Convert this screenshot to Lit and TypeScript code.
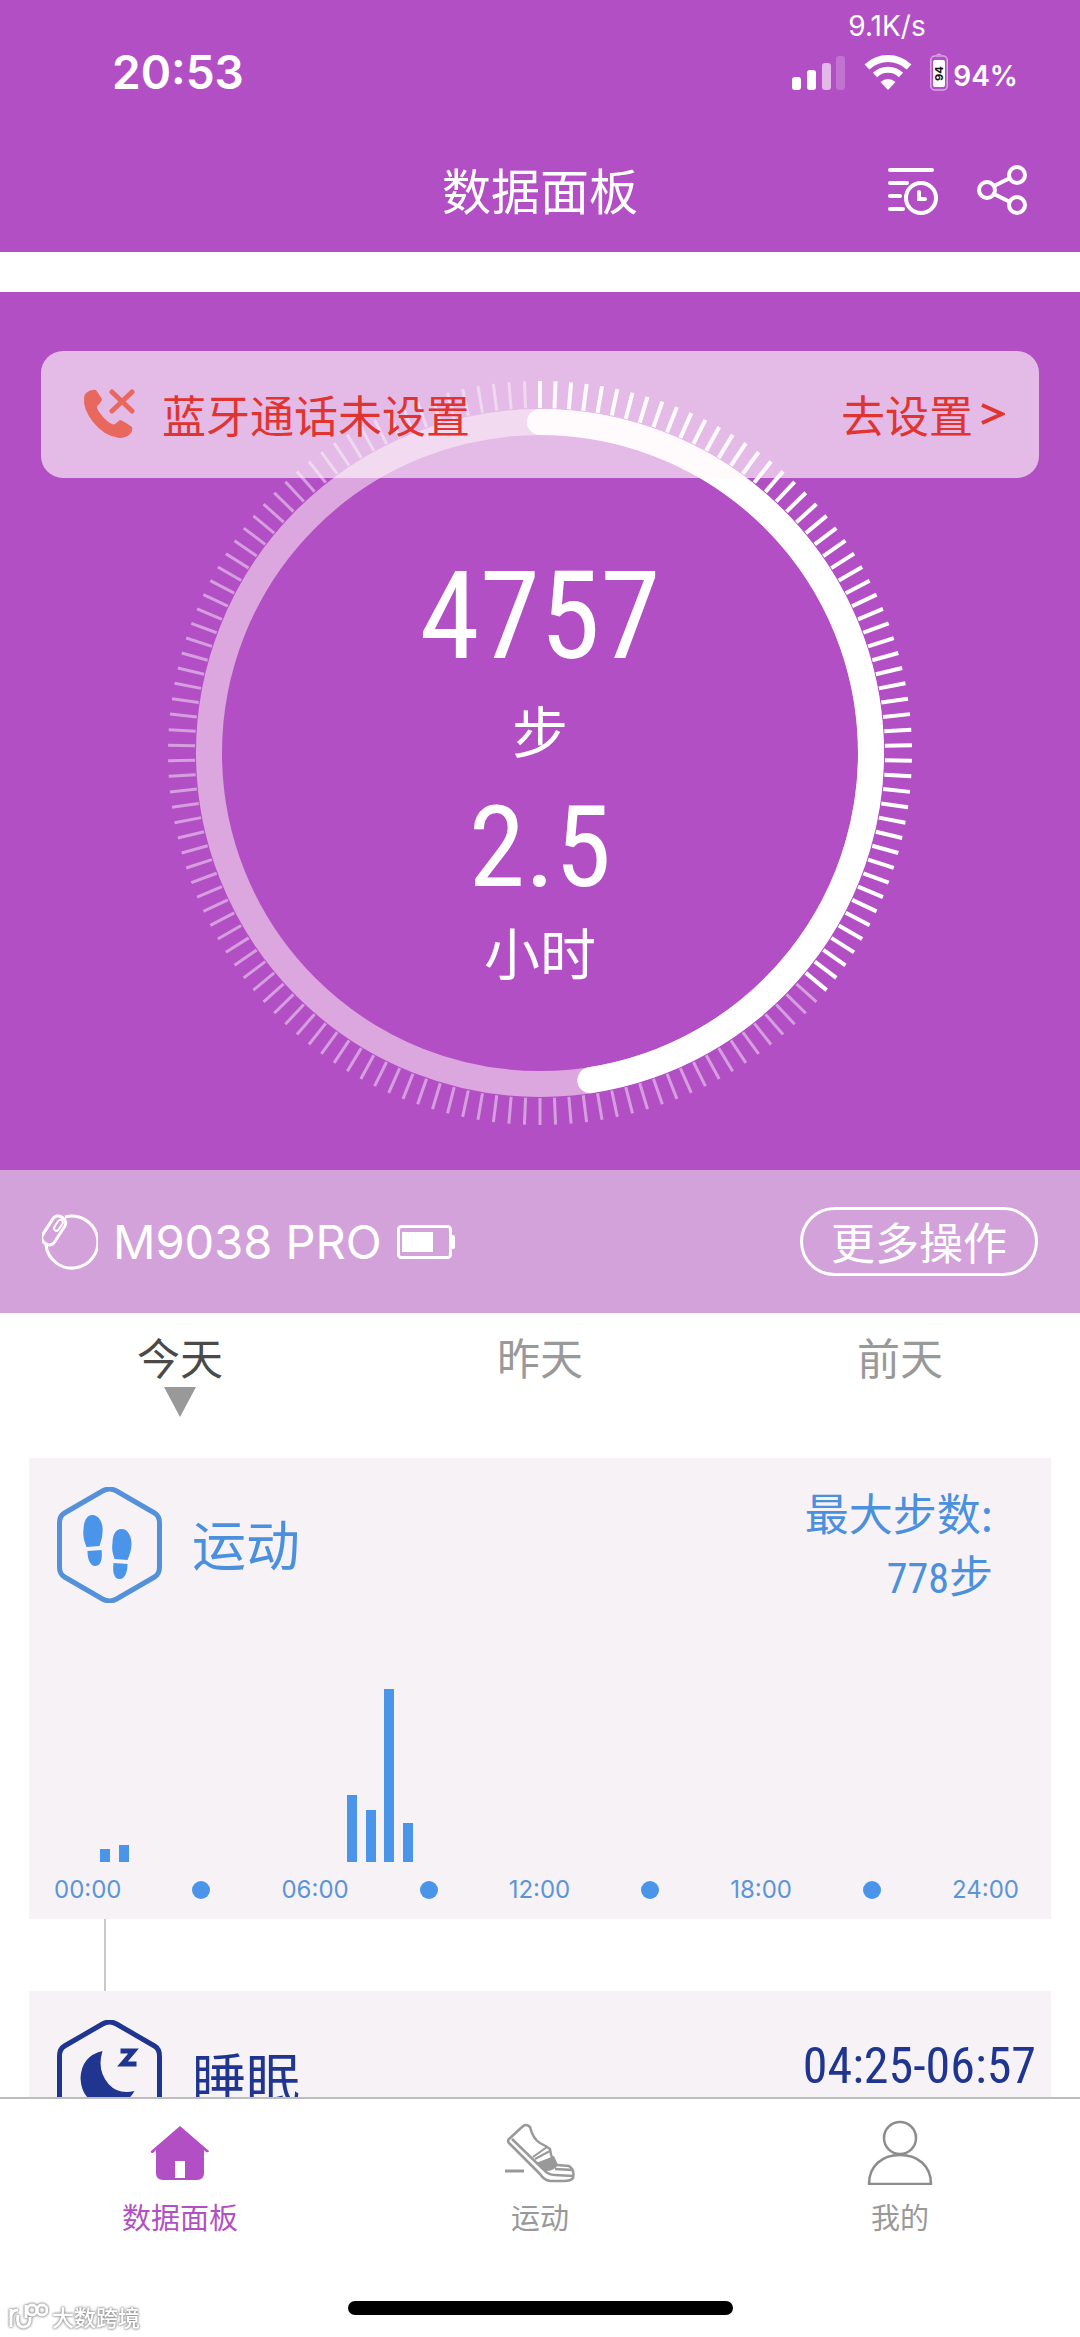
import { LitElement, html, svg, css } from "lit";
import { customElement, state } from "lit/decorators.js";

const STEPS = 4757;
const GOAL = 10000;
const TICKS = 150;
const ACTIVE_TICKS = 54;

const DAYS = ["今天", "昨天", "前天"];

/* Half-hour slots of the day that hold steps: slot index and bar height. */
const ACTIVITY = new Map<number, number>([
  [1, 13],
  [2, 17],
  [14, 67],
  [15, 52],
  [16, 173],
  [17, 39],
]);

const HEX = "M45 4 Q52 0 59 4 L97 26 Q102 29 102 36 V80 Q102 87 97 90 L59 112 Q52 116 45 112 L7 90 Q2 87 2 80 V36 Q2 29 7 26 Z";

const base = css`
  *,
  *::before,
  *::after {
    box-sizing: border-box;
  }
  svg {
    display: block;
    flex: none;
  }
  button {
    margin: 0;
    padding: 0;
    border: 0;
    background: none;
    font: inherit;
    color: inherit;
    cursor: pointer;
  }
`;

@customElement("step-ring")
export class StepRing extends LitElement {
  static styles = [
    base,
    css`
      :host {
        display: grid;
        width: 744px;
        max-width: 100%;
      }
      .dial,
      .readout {
        grid-area: 1 / 1;
      }
      .dial {
        width: 100%;
        height: auto;
      }
      .readout {
        display: flex;
        flex-direction: column;
        align-items: center;
        padding-top: 166px;
      }
      .figure {
        font-family: "Roboto Condensed", "Liberation Sans Narrow", sans-serif;
        font-size: 122px;
        line-height: 140px;
      }
      .figure.small {
        margin-top: 14px;
        font-size: 114px;
        line-height: 124px;
      }
      .unit {
        font-size: 56px;
        line-height: 84px;
      }
    `,
  ];

  render() {
    const angle = (STEPS / GOAL) * 2 * Math.PI;
    const x = 372 + 331 * Math.sin(angle);
    const y = 372 - 331 * Math.cos(angle);
    return html`
      <svg class="dial" viewBox="0 0 744 744" aria-hidden="true">
        ${Array.from(
          { length: TICKS },
          (_, i) => svg`<line x1="372" y1="0" x2="372" y2="27" stroke="#fff"
            stroke-width=${i <= ACTIVE_TICKS ? 4 : 3}
            stroke-opacity=${i <= ACTIVE_TICKS ? 1 : 0.45}
            transform="rotate(${(i * 360) / TICKS} 372 372)" />`,
        )}
        <circle cx="372" cy="372" r="331" fill="none" stroke="#dca6df" stroke-width="26" />
        <path d="M372 41 A331 331 0 0 1 ${x} ${y}" fill="none" stroke="#fff" stroke-width="26" stroke-linecap="round" />
      </svg>
      <div class="readout">
        <span class="figure">${STEPS}</span>
        <span class="unit">步</span>
        <span class="figure small">2.5</span>
        <span class="unit">小时</span>
      </div>
    `;
  }
}

@customElement("step-chart")
export class StepChart extends LitElement {
  static styles = [
    base,
    css`
      :host {
        display: block;
      }
      .bars {
        display: grid;
        grid-template-columns: repeat(48, 1fr);
        align-items: end;
        justify-items: center;
        height: 175px;
        padding: 0 65px 0 48px;
      }
      .bar {
        width: 10px;
        background: #4a94e9;
      }
      .axis {
        display: flex;
        justify-content: space-between;
        align-items: center;
        padding: 14px 32px 15px 25px;
        font-family: Inter, sans-serif;
        font-size: 24px;
        line-height: 28px;
        color: #5a95d8;
      }
      .dot {
        width: 18px;
        height: 18px;
        border-radius: 50%;
        background: #4a94e9;
      }
    `,
  ];

  render() {
    return html`
      <div class="bars">
        ${Array.from({ length: 48 }, (_, i) =>
          ACTIVITY.has(i) ? html`<i class="bar" style="height:${ACTIVITY.get(i)}px"></i>` : html`<i></i>`,
        )}
      </div>
      <div class="axis">
        <span>00:00</span><i class="dot"></i><span>06:00</span><i class="dot"></i><span>12:00</span><i
          class="dot"
        ></i><span>18:00</span><i class="dot"></i><span>24:00</span>
      </div>
    `;
  }
}

@customElement("app-root")
export class AppRoot extends LitElement {
  @state() private day = 0;

  static styles = [
    base,
    css`
      :host {
        display: flex;
        flex-direction: column;
        position: relative;
        height: 100vh;
        overflow: hidden;
        background: #fff;
        font-family: "Noto Sans CJK SC", sans-serif;
        font-weight: 400;
        color: #fff;
      }
      .top {
        flex: none;
        background: #b34fc5;
      }
      .status {
        display: flex;
        justify-content: space-between;
        height: 132px;
        padding: 10px 62px 0 112px;
        font-family: Inter, sans-serif;
      }
      .clock {
        padding-top: 34px;
        font-size: 46px;
        font-weight: 600;
        line-height: 56px;
      }
      .signals {
        display: flex;
        flex-direction: column;
      }
      .speed {
        padding-left: 56px;
        font-size: 28px;
        font-weight: 400;
        line-height: 32px;
      }
      .levels {
        display: flex;
        align-items: flex-end;
        height: 50px;
      }
      .wifi {
        margin-left: 18px;
      }
      .cell {
        margin-left: 18px;
      }
      .percent {
        margin-left: 5px;
        font-size: 28px;
        font-weight: 600;
        line-height: 32px;
      }
      .nav {
        display: grid;
        grid-template-columns: 1fr auto 1fr;
        align-items: center;
        height: 120px;
        padding: 0 52px 4px;
      }
      .title {
        grid-column: 2;
        margin: 0;
        padding-bottom: 2px;
        font-size: 49px;
        font-weight: 400;
        line-height: 72px;
      }
      .tools {
        display: flex;
        justify-content: flex-end;
        gap: 38px;
      }
      .body {
        flex: 1;
        min-height: 0;
        overflow: auto;
        scrollbar-width: none;
        padding-top: 40px;
      }
      .hero {
        position: relative;
        display: flex;
        justify-content: center;
        padding: 89px 0 45px;
        background: #b34fc5;
      }
      .alert {
        position: absolute;
        top: 59px;
        left: 41px;
        right: 41px;
        display: flex;
        align-items: center;
        height: 127px;
        padding: 0 34px 2px 42px;
        border-radius: 22px;
        background: rgba(255, 248, 251, 0.64);
        font-size: 44px;
        line-height: 64px;
        color: #e03430;
      }
      .alert-text {
        flex: 1;
        margin-left: 27px;
      }
      .alert-link {
        display: flex;
        align-items: center;
        gap: 8px;
        color: inherit;
        text-decoration: none;
      }
      .device {
        display: flex;
        align-items: center;
        height: 143px;
        padding: 0 42px;
        background: #d4a2db;
      }
      .model {
        margin: 0 15px;
        font-family: Inter, sans-serif;
        font-size: 47px;
        line-height: 60px;
      }
      .more {
        margin-left: auto;
        height: 69px;
        padding: 0 28px 2px;
        border: 3px solid #fff;
        border-radius: 35px;
        font-size: 44px;
        line-height: 60px;
      }
      .days {
        display: grid;
        grid-template-columns: repeat(3, 1fr);
        height: 145px;
      }
      .day {
        display: flex;
        flex-direction: column;
        align-items: center;
        padding-top: 12px;
        font-size: 43px;
        line-height: 62px;
        color: #999;
      }
      .day.on {
        color: #4a4a4a;
      }
      .card {
        margin: 0 29px;
        background: #f6f2f6;
      }
      .card-head {
        display: flex;
        justify-content: space-between;
        height: 229px;
        padding: 29px 58px 0 28px;
        color: #4a90dd;
      }
      .name {
        display: flex;
        align-items: center;
        gap: 30px;
        height: 116px;
        margin: 0;
        font-size: 54px;
        font-weight: 400;
        line-height: 80px;
      }
      .name span {
        padding-bottom: 5px;
      }
      .best {
        margin-top: -6px;
        text-align: right;
        font-size: 44px;
        line-height: 62px;
      }
      .narrow {
        font-family: "Roboto Condensed", "Liberation Sans Narrow", sans-serif;
      }
      .best .narrow {
        font-size: 42px;
      }
      .link {
        width: 2px;
        height: 72px;
        margin-left: 104px;
        background: #c8c8c8;
      }
      .card-head.sleep {
        padding-right: 15px;
        color: #1f358f;
      }
      .range {
        padding-top: 16px;
        font-size: 50px;
        line-height: 60px;
      }
      .tabs {
        flex: none;
        display: grid;
        grid-template-columns: repeat(3, 1fr);
        grid-template-rows: 1fr auto;
        height: 240px;
        padding-bottom: 22px;
        border-top: 2px solid #bdbdbd;
        background: #fff;
      }
      .tab {
        display: flex;
        flex-direction: column;
        align-items: center;
        padding-top: 18px;
        font-size: 29px;
        line-height: 44px;
        color: #999;
        text-decoration: none;
      }
      .tab svg {
        margin-bottom: 9px;
      }
      .tab.on {
        color: #b34fc5;
      }
      .home-bar {
        grid-column: 1 / -1;
        justify-self: center;
        width: 385px;
        height: 14px;
        border-radius: 7px;
        background: #000;
      }
      .mark {
        position: absolute;
        left: 8px;
        bottom: 5px;
        display: flex;
        align-items: center;
        gap: 4px;
        font-size: 22px;
        font-weight: 500;
        line-height: 32px;
        color: #fff;
        filter: drop-shadow(0 0 1px #888) drop-shadow(0 0 1px #aaa);
      }
    `,
  ];

  private renderTop() {
    return html`
      <header class="top">
        <div class="status">
          <span class="clock">20:53</span>
          <div class="signals">
            <span class="speed">9.1K/s</span>
            <div class="levels">
              <svg width="54" height="38" viewBox="0 0 54 38" fill="#fff" aria-hidden="true">
                <rect x="0" y="23" width="9" height="13" rx="3" />
                <rect x="15" y="16" width="9" height="20" rx="3" />
                <rect x="30" y="9" width="9" height="27" rx="3" opacity="0.6" />
                <rect x="44" y="2" width="9" height="34" rx="3" opacity="0.2" />
              </svg>
              <svg class="wifi" width="48" height="38" viewBox="0 0 48 38" fill="none" aria-hidden="true">
                <path d="M3 13 A30 30 0 0 1 45 13" stroke="#fff" stroke-width="7" />
                <path d="M11 21 A18.500 18.500 0 0 1 37 21" stroke="#fff" stroke-width="6" />
                <path d="M16.500 28 Q24 22 31.500 28 L24 36 Z" fill="#fff" />
              </svg>
              <svg class="cell" width="18" height="40" viewBox="0 0 18 40" aria-hidden="true">
                <path d="M6 3 Q9 0 12 3 Z" fill="#dba7e2" />
                <rect x="0.750" y="4" width="16.500" height="34" rx="4" fill="none" stroke="#dba7e2" stroke-width="1.500" />
                <rect x="3" y="8" width="12" height="27" rx="2" fill="#fff" />
                <text transform="translate(12.500 29) rotate(-90)" font-size="11" font-weight="700" fill="#111">94</text>
              </svg>
              <span class="percent">94%</span>
            </div>
          </div>
        </div>
        <div class="nav">
          <h1 class="title">数据面板</h1>
          <div class="tools">
            <button aria-label="历史记录">
              <svg width="52" height="52" viewBox="0 0 52 52" fill="none" stroke="#fff" stroke-width="4" stroke-linecap="round">
                <path d="M4 6H46M4 19H21M4 32H14M4 45H17" />
                <circle cx="35" cy="34" r="15" />
                <path d="M33 28V35H39" />
              </svg>
            </button>
            <button aria-label="分享">
              <svg width="52" height="52" viewBox="0 0 52 52" fill="none" stroke="#fff" stroke-width="4">
                <circle cx="11" cy="26" r="8" />
                <circle cx="41" cy="11" r="8" />
                <circle cx="41" cy="41" r="8" />
                <path d="M18 22L34 14M18 30L34 38" />
              </svg>
            </button>
          </div>
        </div>
      </header>
    `;
  }

  private renderHero() {
    return html`
      <section class="hero">
        <step-ring></step-ring>
        <div class="alert">
          <svg width="52" height="50" viewBox="0 0 52 50" aria-hidden="true">
            <path
              d="M3 4 Q8 0 13 1 L19 10 Q19 13 14 17 Q13 20 21 29 Q29 37 32 35 L37 31 Q39 31 49 38 Q50 40 48 44 Q44 49 36 49 Q21 47 10 33 Q0 20 1 9 Q1 6 3 4 Z"
              fill="#e8685e"
            />
            <path d="M29 3L49 22M49 3L29 22" stroke="#e8685e" stroke-width="5" stroke-linecap="round" />
          </svg>
          <span class="alert-text">蓝牙通话未设置</span>
          <a class="alert-link" href="#bluetooth">
            <span>去设置</span>
            <svg width="24" height="22" viewBox="0 0 24 22" fill="none" aria-hidden="true">
              <path d="M1 2L21 11L1 20" stroke="#e03430" stroke-width="4" />
            </svg>
          </a>
        </div>
      </section>
      <section class="device">
        <svg width="56" height="56" viewBox="0 0 56 56" fill="none" stroke="#fff" stroke-width="3" aria-hidden="true">
          <path d="M23 3 A26 26 0 1 1 4 31" />
          <rect x="5" y="1" width="14" height="31" rx="6" transform="rotate(33 12 16)" />
          <rect x="14" y="5" width="5" height="12" rx="2.500" transform="rotate(33 16 11)" stroke-width="2" />
        </svg>
        <span class="model">M9038 PRO</span>
        <svg width="58" height="34" viewBox="0 0 58 34" aria-hidden="true">
          <rect x="1.500" y="1.500" width="52" height="31" rx="3" fill="none" stroke="#fff" stroke-width="3" />
          <rect x="5" y="7" width="31" height="20" fill="#fff" />
          <path d="M54 10h2q2 0 2 2v10q0 2-2 2h-2z" fill="#fff" />
        </svg>
        <button class="more">更多操作</button>
      </section>
    `;
  }

  private renderCards() {
    return html`
      <section class="card">
        <div class="card-head">
          <h2 class="name">
            <svg width="105" height="116" viewBox="0 0 104 116" aria-hidden="true">
              <path d=${HEX} fill="none" stroke="#5491da" stroke-width="5" />
              <g fill="#4a94e9">
                <path d="M35 28 C42 28 46 37 45 45 C45 51 43 55 42 59 L29 60 C27 55 25 49 26 43 C26 35 29 28 35 28Z" />
                <path d="M30 64 L44 63 C45 70 44 79 38 79 C32 79 30 71 30 64Z" />
                <path d="M64 42 C71 42 74 50 74 57 C74 63 72 68 70 73 L57 72 C55 66 54 62 55 56 C55 48 58 42 64 42Z" />
                <path d="M56 76 L70 77 C70 84 68 92 62 92 C56 92 55 84 56 76Z" />
              </g>
            </svg>
            <span>运动</span>
          </h2>
          <div class="best">
            <div>最大步数:</div>
            <div><span class="narrow">778</span>步</div>
          </div>
        </div>
        <step-chart></step-chart>
      </section>
      <div class="link"></div>
      <section class="card">
        <div class="card-head sleep">
          <h2 class="name">
            <svg width="105" height="116" viewBox="0 0 104 116" aria-hidden="true">
              <path d=${HEX} fill="none" stroke="#1f358f" stroke-width="5" />
              <path d="M45 31 Q24 36 23 58 Q24 83 49 86 Q69 86 77 71 Q61 75 51 64 Q39 50 45 31Z" fill="#1f358f" />
              <path d="M63 31H76L65 44H79" fill="none" stroke="#1f358f" stroke-width="5" />
            </svg>
            <span>睡眠</span>
          </h2>
          <div class="range narrow">04:25-06:57</div>
        </div>
      </section>
    `;
  }

  private renderTabs() {
    return html`
      <nav class="tabs">
        <a class="tab on" href="#dashboard">
          <svg width="64" height="68" viewBox="0 0 64 68" aria-hidden="true">
            <path
              d="M32 9 L61 34 Q61 36 58 35 L56 33 V56 Q56 63 49 63 H15 Q8 63 8 56 V33 L5 36 Q2 36 3 34 Z"
              fill="#b34fc5"
            />
            <rect x="27" y="44" width="10" height="17" fill="#fff" />
          </svg>
          数据面板
        </a>
        <a class="tab" href="#sport">
          <svg width="72" height="68" viewBox="0 0 72 68" fill="none" stroke="#999" stroke-width="2.500" aria-hidden="true">
            <path
              d="M5 22 L18 10 Q22 6 26 10 Q29 22 36 26 Q42 29 46 32 Q47 42 53 48 L65 49 Q71 53 69 61 Q67 64 60 64 L46 64 Q40 63 36 57 L5 26 Q3 24 5 22 Z"
              stroke-linejoin="round"
            />
            <path d="M8 22 L39 52 Q44 58 51 58 L69 59 M51 52 L69 53" />
            <path d="M31 42 L46 34 M29 40 L43 30" stroke-width="2" />
            <path d="M32 46 L50 39 L54 48 Q50 54 42 54 Z" fill="#999" stroke="none" />
            <path d="M1 54H20" stroke-width="3" />
          </svg>
          运动
        </a>
        <a class="tab" href="#me">
          <svg width="68" height="68" viewBox="0 0 68 68" fill="none" stroke="#8c8c8c" stroke-width="2.500" aria-hidden="true">
            <circle cx="34" cy="21" r="16" />
            <path d="M3 67 C3 49 16 38 34 38 C52 38 65 49 65 67 Z" />
          </svg>
          我的
        </a>
        <div class="home-bar"></div>
      </nav>
      <div class="mark">
        <svg width="40" height="32" viewBox="0 0 40 32" fill="none" stroke="#fff" stroke-width="3" aria-hidden="true">
          <path d="M3 9V27M3 16Q4 10 10 10M10 15Q8 27 16 27Q23 26 22 17" />
          <circle cx="24" cy="10" r="5" />
          <circle cx="34" cy="10" r="5" />
          <path d="M18 5V18" />
        </svg>
        <span>大数跨境</span>
      </div>
    `;
  }

  render() {
    return html`
      ${this.renderTop()}
      <main class="body">
        ${this.renderHero()}
        <div class="days">
          ${DAYS.map(
            (label, i) => html`
              <button class="day ${i === this.day ? "on" : ""}" @click=${() => (this.day = i)}>
                <span>${label}</span>
                ${i === this.day
                  ? html`<svg width="34" height="30" viewBox="0 0 34 30"><path d="M1 0H33L17 30Z" fill="#999" /></svg>`
                  : ""}
              </button>
            `,
          )}
        </div>
        ${this.renderCards()}
      </main>
      ${this.renderTabs()}
    `;
  }
}
